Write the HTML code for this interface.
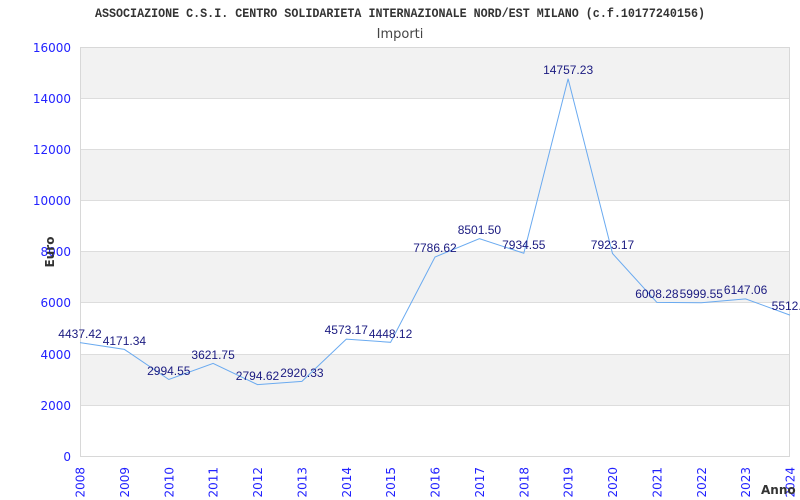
<!DOCTYPE html>
<html><head><meta charset="utf-8"><style>html,body{margin:0;padding:0;background:#fff}svg{display:block}</style></head>
<body>
<svg width="800" height="500" xmlns="http://www.w3.org/2000/svg">
<rect width="800" height="500" fill="#fff"/>
<text x="400" y="17" text-anchor="middle" font-family="Liberation Mono, monospace" font-weight="bold" font-size="13" fill="#333" textLength="610" lengthAdjust="spacingAndGlyphs">ASSOCIAZIONE C.S.I. CENTRO SOLIDARIETA INTERNAZIONALE NORD/EST MILANO (c.f.10177240156)</text>
<text x="400" y="38" text-anchor="middle" font-family="DejaVu Sans, sans-serif" font-size="13" fill="#444">Importi</text>
<g fill="#f2f2f2">
<rect x="80" y="47" width="710" height="51"/>
<rect x="80" y="149" width="710" height="51"/>
<rect x="80" y="251" width="710" height="52"/>
<rect x="80" y="354" width="710" height="51"/>
</g>
<g stroke="#dddddd" stroke-width="1">
<line x1="80" y1="98.5" x2="790" y2="98.5"/>
<line x1="80" y1="149.5" x2="790" y2="149.5"/>
<line x1="80" y1="200.5" x2="790" y2="200.5"/>
<line x1="80" y1="251.5" x2="790" y2="251.5"/>
<line x1="80" y1="302.5" x2="790" y2="302.5"/>
<line x1="80" y1="354.5" x2="790" y2="354.5"/>
<line x1="80" y1="405.5" x2="790" y2="405.5"/>
</g>
<rect x="80.5" y="47.5" width="709" height="409" fill="none" stroke="#d8d8d8"/>
<g font-family="DejaVu Sans, sans-serif" font-size="12" fill="#2222ff" text-anchor="end">
<text x="71" y="52">16000</text><text x="71" y="103">14000</text><text x="71" y="154">12000</text>
<text x="71" y="205">10000</text><text x="71" y="256">8000</text><text x="71" y="307">6000</text>
<text x="71" y="359">4000</text><text x="71" y="410">2000</text><text x="71" y="461">0</text>
</g>
<text transform="translate(54,252) rotate(-90)" text-anchor="middle" font-family="DejaVu Sans, sans-serif" font-weight="bold" font-size="12" fill="#333">Euro</text>
<g font-family="DejaVu Sans, sans-serif" font-size="12" fill="#2222ff" text-anchor="end">
<text transform="translate(84.5,467) rotate(-90)">2008</text>
<text transform="translate(128.9,467) rotate(-90)">2009</text>
<text transform="translate(173.3,467) rotate(-90)">2010</text>
<text transform="translate(217.6,467) rotate(-90)">2011</text>
<text transform="translate(262,467) rotate(-90)">2012</text>
<text transform="translate(306.4,467) rotate(-90)">2013</text>
<text transform="translate(350.8,467) rotate(-90)">2014</text>
<text transform="translate(395.1,467) rotate(-90)">2015</text>
<text transform="translate(439.5,467) rotate(-90)">2016</text>
<text transform="translate(483.9,467) rotate(-90)">2017</text>
<text transform="translate(528.3,467) rotate(-90)">2018</text>
<text transform="translate(572.6,467) rotate(-90)">2019</text>
<text transform="translate(617,467) rotate(-90)">2020</text>
<text transform="translate(661.4,467) rotate(-90)">2021</text>
<text transform="translate(705.8,467) rotate(-90)">2022</text>
<text transform="translate(750.1,467) rotate(-90)">2023</text>
<text transform="translate(794.5,467) rotate(-90)">2024</text>
</g>
<text x="761" y="494" font-family="DejaVu Sans, sans-serif" font-weight="bold" font-size="12" fill="#333">Anno</text>
<polyline fill="none" stroke="#6aaaf0" stroke-width="1" points="80,342.6 124.4,349.4 168.8,379.5 213.1,363.4 257.5,384.6 301.9,381.4 346.3,339.1 390.6,342.3 435,257 479.4,238.7 523.8,253.2 568.1,78.8 612.5,253.5 656.9,302.4 701.3,302.7 745.6,298.9 790,315.1"/>
<g font-family="Liberation Sans, Arial, sans-serif" font-size="12" fill="#1a1a80" text-anchor="middle">
<text x="80" y="338">4437.42</text>
<text x="124.4" y="345">4171.34</text>
<text x="168.8" y="375">2994.55</text>
<text x="213.1" y="359">3621.75</text>
<text x="257.5" y="380">2794.62</text>
<text x="301.9" y="377">2920.33</text>
<text x="346.3" y="334">4573.17</text>
<text x="390.6" y="338">4448.12</text>
<text x="435" y="252">7786.62</text>
<text x="479.4" y="234">8501.50</text>
<text x="523.8" y="249">7934.55</text>
<text x="568.1" y="74">14757.23</text>
<text x="612.5" y="249">7923.17</text>
<text x="656.9" y="298">6008.28</text>
<text x="701.3" y="298">5999.55</text>
<text x="745.6" y="294">6147.06</text>
<text x="790" y="310">5512.8</text>
</g>
</svg>
</body></html>
